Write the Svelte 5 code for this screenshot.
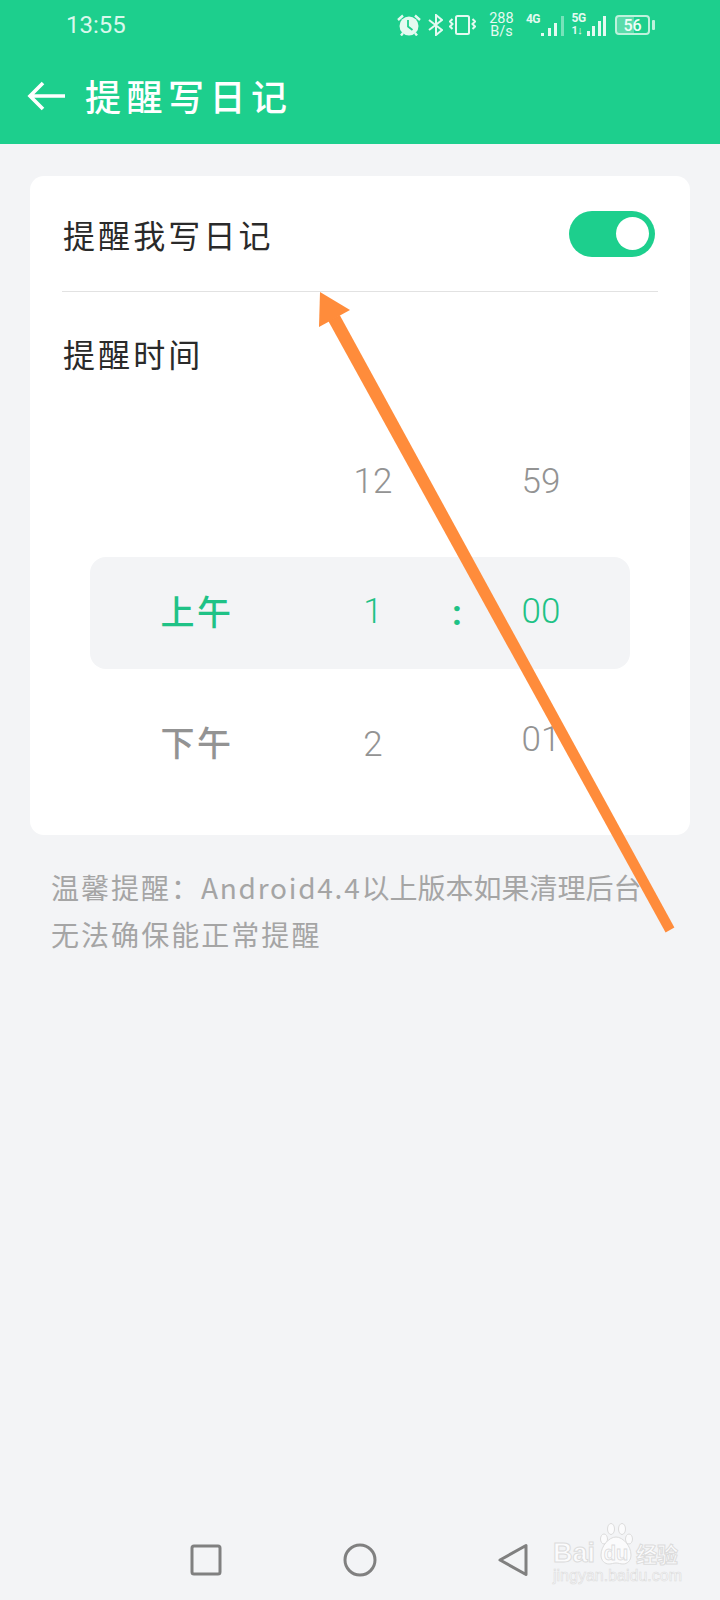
<svelte:options runes={true} />

<script lang="ts">
  const rows = [
    { period: "", hour: "12", minute: "59", kind: "top" },
    { period: "上午", hour: "1", minute: "00", kind: "active" },
    { period: "下午", hour: "2", minute: "01", kind: "bottom" }
  ];
  const bars4g = [3, 8, 13, 20];
  const bars5g = [5, 10, 15, 20];
  let remind = $state(true);
</script>

<div class="page">
  <header class="appbar">
    <div class="status">
      <span class="clock">13:55</span>
      <div class="status-icons">
        <svg class="ic-alarm" width="24" height="22" viewBox="0 0 24 22">
          <circle cx="12" cy="12" r="9.500" fill="#e4faf1" />
          <path d="M11 6v6.500l4.500 3.500" fill="none" stroke="#1dcf8d" stroke-width="1.800" />
          <path d="M1 6 6 1.500M23 6 18 1.500M6 19l-2 2.500M18 19l2 2.500" stroke="#e4faf1" stroke-width="2.400" fill="none" />
        </svg>
        <svg class="ic-bt" width="15" height="22" viewBox="0 0 15 22">
          <path d="M1 6l13 10-6 5V1l6 5L1 16" fill="none" stroke="#e4faf1" stroke-width="2" />
        </svg>
        <svg class="ic-vib" width="27" height="20" viewBox="0 0 27 20">
          <rect x="7" y="1" width="13" height="18" rx="1.500" fill="none" stroke="#e4faf1" stroke-width="2" />
          <path d="M3.500 4 1 6.500 3.500 9 1 11.500 3.500 14M23.500 4 26 6.500 23.500 9 26 11.500 23.500 14" fill="none" stroke="#e4faf1" stroke-width="2" />
        </svg>
        <div class="speed"><span>288</span><span>B/s</span></div>
        <div class="signal net4">
          <span class="net">4G</span>
          <div class="bars wide">
            {#each bars4g as h, i}
              <i class="bar" class:dim={i === 3} style="height: {h}px"></i>
            {/each}
          </div>
        </div>
        <div class="signal net5">
          <div class="net-stack"><span class="net">5G</span><span class="net small">1↓</span></div>
          <div class="bars">
            {#each bars5g as h}
              <i class="bar" style="height: {h}px"></i>
            {/each}
          </div>
        </div>
        <div class="battery">
          <div class="battery-body"><span>56</span></div>
          <i class="battery-cap"></i>
        </div>
      </div>
    </div>
    <div class="toolbar">
      <svg class="back" width="40" height="32" viewBox="0 0 40 32">
        <path d="M38 16H3M16 3 3 16l13 13" fill="none" stroke="#fff" stroke-width="3.600" />
      </svg>
      <h1>提醒写日记</h1>
    </div>
  </header>

  <main class="content">
    <section class="card">
      <div class="switch-row">
        <span class="label">提醒我写日记</span>
        <button class="toggle" class:on={remind} aria-label="提醒我写日记" onclick={() => (remind = !remind)}>
          <i class="knob"></i>
        </button>
      </div>
      <h2 class="label section">提醒时间</h2>
      <div class="picker">
        {#each rows as row}
          <div class="picker-row {row.kind}">
            <span class="period">{row.period}</span>
            <span class="num">{row.hour}</span>
            <span class="num colon">{row.kind === "active" ? ":" : ""}</span>
            <span class="num minute">{row.minute}</span>
          </div>
        {/each}
      </div>
    </section>
    <p class="note"><span class="lead">温馨提醒：</span><span class="latin">Android4.4</span><span class="tight">以上版本如果清理后台</span><br /><span class="second">无法确保能正常提醒</span></p>
  </main>

  <nav class="navbar">
    <svg width="32" height="32" viewBox="0 0 32 32">
      <rect x="2" y="2" width="28" height="28" rx="2" fill="none" stroke="#808080" stroke-width="3" />
    </svg>
    <svg width="34" height="34" viewBox="0 0 34 34">
      <circle cx="17" cy="17" r="15" fill="none" stroke="#808080" stroke-width="3" />
    </svg>
    <svg width="30" height="34" viewBox="0 0 30 34">
      <path d="M28 2.500V31.500L2 17Z" fill="none" stroke="#808080" stroke-width="3" stroke-linejoin="round" />
    </svg>
  </nav>

  <div class="watermark">
    <div class="wm-top">
      <span class="wm-bai">Bai</span>
      <svg class="wm-paw" width="36" height="44" viewBox="0 0 36 44">
        <g fill="#fbfbfc" stroke="#dcdcdc" stroke-width="1">
          <ellipse cx="6" cy="17" rx="3.500" ry="5" />
          <ellipse cx="13" cy="7" rx="3.500" ry="5.500" />
          <ellipse cx="24" cy="7" rx="3.500" ry="5.500" />
          <ellipse cx="31" cy="17" rx="3.500" ry="5" />
          <path d="M18 15c7 0 15 9 15 18 0 6-4 9-8 9-3 0-4-1-7-1s-4 1-7 1c-4 0-8-3-8-9 0-9 8-18 15-18Z" />
        </g>
        <text x="18" y="38" text-anchor="middle" class="wm-du">du</text>
      </svg>
      <span class="wm-cn">经验</span>
    </div>
    <span class="wm-url">jingyan.baidu.com</span>
  </div>

  <svg class="arrow" width="720" height="1600" viewBox="0 0 720 1600">
    <polygon points="339.700,314.900 328.300,321.100 665.600,932.400 674.400,927.600" fill="#ff8c3b" />
    <polygon points="320,292 350,310 319,327" fill="#ff8c3b" />
  </svg>
</div>

<style>
  :global(body) {
    margin: 0;
    background: #f3f4f6;
  }

  .page {
    position: relative;
    display: flex;
    flex-direction: column;
    width: 720px;
    height: 1600px;
    overflow: hidden;
    background: #f3f4f6;
    font-family: "Noto Sans CJK SC", "Noto Sans", sans-serif;
  }

  .appbar {
    height: 144px;
    background: #1dcf8d;
    color: #fff;
  }

  .status {
    display: flex;
    align-items: center;
    justify-content: space-between;
    height: 50px;
    padding: 0 65px 0 66px;
  }

  .clock {
    font-family: Roboto, sans-serif;
    font-size: 24px;
    color: #d9f8ec;
  }

  .status-icons {
    display: flex;
    align-items: center;
    height: 30px;
    color: #e4faf1;
  }

  .ic-bt {
    margin-left: 7px;
  }

  .ic-vib {
    margin-left: 6px;
  }

  .speed {
    display: flex;
    flex-direction: column;
    align-items: center;
    width: 25px;
    margin-left: 13px;
    font-family: Roboto, sans-serif;
    font-size: 14.500px;
    line-height: 13px;
  }

  .signal {
    display: flex;
    align-items: flex-end;
    height: 22px;
  }

  .net4 {
    margin-left: 12px;
  }

  .net5 {
    margin-left: 8px;
  }

  .net {
    align-self: flex-start;
    font-family: Roboto, sans-serif;
    font-size: 12px;
    font-weight: 700;
    line-height: 11px;
    letter-spacing: -0.500px;
  }

  .net-stack {
    display: flex;
    flex-direction: column;
    width: 13px;
  }

  .net.small {
    font-size: 11px;
    margin-top: 1px;
  }

  .bars {
    display: flex;
    align-items: flex-end;
    gap: 2.500px;
    margin-left: 2px;
  }

  .bars.wide {
    gap: 3.500px;
    margin-left: 1px;
  }

  .bar {
    display: block;
    width: 3px;
    background: #e4faf1;
  }

  .bar.dim {
    opacity: 0.45;
  }

  .battery {
    display: flex;
    align-items: center;
    margin-left: 9px;
  }

  .battery-body {
    display: flex;
    align-items: center;
    justify-content: center;
    width: 35px;
    height: 20px;
    box-sizing: border-box;
    border: 2px solid #bdf2dc;
    border-radius: 4px;
    background: linear-gradient(90deg, #5bdcab 56%, transparent 56%);
    font-family: Roboto, sans-serif;
    font-size: 16px;
    font-weight: 500;
    color: #f0fdf8;
  }

  .battery-cap {
    display: block;
    width: 3px;
    height: 10px;
    margin-left: 2px;
    border-radius: 1px;
    background: #bdf2dc;
  }

  .toolbar {
    display: flex;
    align-items: center;
    height: 94px;
    padding-left: 27px;
  }

  .back {
    margin-top: -2px;
  }

  h1 {
    margin: -4px 0 0 18px;
    font-size: 36px;
    font-weight: 500;
    line-height: 44px;
    letter-spacing: 5.500px;
  }

  .content {
    flex: 1;
    padding: 32px 30px 0;
  }

  .card {
    height: 659px;
    box-sizing: border-box;
    border-radius: 14px;
    background: #fff;
  }

  .switch-row {
    display: flex;
    align-items: center;
    justify-content: space-between;
    height: 115px;
    margin: 0 32px;
    padding: 0 3px 0 1px;
    border-bottom: 1px solid #e2e2e2;
  }

  .label {
    font-size: 32px;
    font-weight: 400;
    line-height: 40px;
    letter-spacing: 3.100px;
    color: #2a2a2a;
  }

  .toggle {
    display: flex;
    align-items: center;
    justify-content: flex-end;
    width: 86px;
    height: 46px;
    padding: 0 6px;
    border: 0;
    border-radius: 23px;
    background: #c9c9c9;
  }

  .toggle.on {
    background: #1dcf8d;
  }

  .knob {
    display: block;
    width: 33px;
    height: 33px;
    border-radius: 50%;
    background: #fff;
  }

  .section {
    margin: 41px 0 0 33px;
  }

  .picker {
    margin: 54px 60px 0;
  }

  .picker-row {
    display: grid;
    grid-template-columns: 214px 138px 30px 138px;
    align-items: center;
    box-sizing: border-box;
    height: 130px;
    text-align: center;
    color: #939393;
  }

  .picker-row.top {
    padding-bottom: 24px;
  }

  .picker-row.bottom {
    padding-top: 20px;
  }

  .picker-row.active {
    height: 112px;
    border-radius: 16px;
    background: #f3f4f6;
    color: #1fc286;
  }

  .period {
    margin-bottom: 5px;
    font-size: 34px;
    font-weight: 500;
    letter-spacing: 2.500px;
  }

  .num {
    font-family: Roboto, sans-serif;
    font-size: 35px;
    font-weight: 300;
  }

  .top .num {
    margin-top: 2px;
  }

  .active .num {
    margin-bottom: 4px;
  }

  .active .colon {
    margin-bottom: 0;
    font-weight: 700;
  }

  .bottom .minute {
    margin-bottom: 10px;
  }

  .note {
    margin: 29px 0 0 21px;
    font-size: 28px;
    line-height: 47px;
    white-space: nowrap;
    color: #a5a5a5;
  }

  .lead {
    letter-spacing: 2px;
  }

  .latin {
    letter-spacing: 1.750px;
  }

  .tight {
    letter-spacing: 0;
  }

  .second {
    letter-spacing: 2.050px;
  }

  .navbar {
    display: flex;
    align-items: center;
    height: 80px;
    padding: 0 0 0 190px;
    gap: 121px;
  }

  /* baidu stamp and the hand-drawn arrow sit over the screenshot */
  .watermark {
    position: absolute;
    top: 1522px;
    left: 553px;
    width: 130px;
    display: flex;
    flex-direction: column;
    color: #fff;
    font-family: "Liberation Sans", sans-serif;
  }

  .wm-top {
    display: flex;
    align-items: flex-end;
    height: 44px;
  }

  .wm-bai {
    width: 45px;
    font-size: 27px;
    font-weight: 700;
    line-height: 26px;
    color: #fbfbfc;
    -webkit-text-stroke: 1px #dcdcdc;
  }

  .wm-du {
    font-family: "Liberation Sans", sans-serif;
    font-size: 20px;
    font-weight: 700;
    fill: #fbfbfc;
    stroke: #dcdcdc;
    stroke-width: 0.800px;
  }

  .wm-cn {
    margin-left: 2px;
    font-family: "Noto Sans CJK SC", sans-serif;
    font-size: 21px;
    line-height: 26px;
    font-weight: 700;
    color: #fbfbfc;
    -webkit-text-stroke: 1px #dcdcdc;
  }

  .wm-url {
    margin-top: 1px;
    font-size: 16px;
    line-height: 18px;
    color: #fbfbfc;
    -webkit-text-stroke: 0.600px #dcdcdc;
    white-space: nowrap;
  }

  .arrow {
    position: absolute;
    top: 0;
    left: 0;
    pointer-events: none;
  }
</style>
